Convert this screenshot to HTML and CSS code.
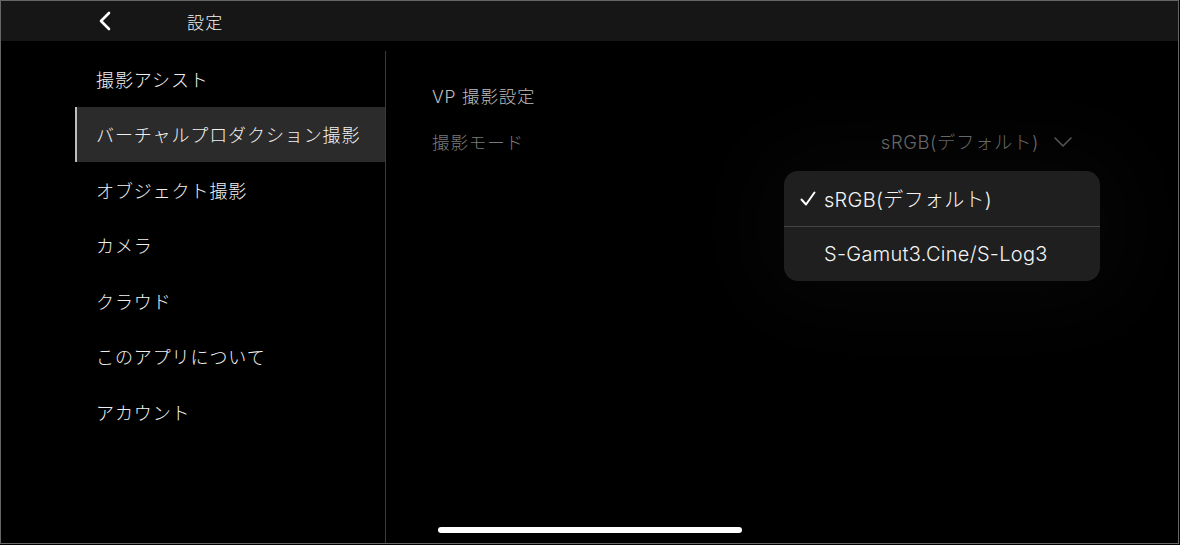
FILE: index.html
```html
<!DOCTYPE html>
<html lang="ja">
<head>
  <meta charset="UTF-8">
  <title>設定</title>
  <link rel="stylesheet" href="styles.css">
</head>
<body>
  <div class="screen">
    <header class="topbar">
      <button class="back" aria-label="戻る">
        <svg width="14" height="20" viewBox="0 0 14 20"><path d="M11 2 L3 10 L11 18" fill="none" stroke="#fff" stroke-width="2.6" stroke-linecap="round" stroke-linejoin="round"/></svg>
      </button>
      <div class="title">設定</div>
    </header>

    <div class="main">
      <nav class="sidebar">
        <div class="nav-item">撮影アシスト</div>
        <div class="nav-item active">バーチャルプロダクション撮影</div>
        <div class="nav-item">オブジェクト撮影</div>
        <div class="nav-item">カメラ</div>
        <div class="nav-item">クラウド</div>
        <div class="nav-item">このアプリについて</div>
        <div class="nav-item">アカウント</div>
      </nav>

      <section class="content">
        <div class="section-title">VP 撮影設定</div>
        <div class="row">
          <span class="label">撮影モード</span>
          <span class="value">sRGB(デフォルト)
            <svg class="chev" width="20" height="12" viewBox="0 0 20 12"><path d="M2 2 L10 10 L18 2" fill="none" stroke="#555" stroke-width="1.6" stroke-linecap="round" stroke-linejoin="round"/></svg>
          </span>
        </div>

        <div class="menu">
          <div class="menu-item">
            <svg class="check" width="16" height="16" viewBox="0 0 16 16"><path d="M1.5 8.5 L6 13.5 L14.5 1.5" fill="none" stroke="#fff" stroke-width="2" stroke-linecap="round" stroke-linejoin="round"/></svg>
            sRGB(デフォルト)
          </div>
          <div class="menu-item">S-Gamut3.Cine/S-Log3</div>
        </div>
      </section>
    </div>

    <div class="home-bar"></div>
  </div>
</body>
</html>
```

FILE: styles.css
```css
body {
  margin: 0;
  background: #000;
  font-family: Inter, "Noto Sans CJK JP", sans-serif;
  color: #f0f0f0;
}
.screen {
  position: relative;
  box-sizing: border-box;
  width: 1179px;
  height: 544px;
  border: 1px solid #666;
  background: #000;
  overflow: hidden;
  display: flex;
  flex-direction: column;
}
.topbar {
  height: 40px;
  background: #161616;
  display: flex;
  align-items: center;
  flex-shrink: 0;
}
.back {
  background: none;
  border: none;
  padding: 0;
  margin-left: 97px;
  width: 16px;
  height: 20px;
  display: flex;
  align-items: center;
}
.title {
  margin-left: 73px;
  font-family: "Noto Sans CJK JP", sans-serif;
  font-size: 17px;
  font-weight: 300;
  letter-spacing: 1.2px;
  color: #f2f2f2;
}
.main {
  flex: 1;
  display: flex;
}
.sidebar {
  width: 384px;
  margin-top: 10px;
  border-right: 1px solid #3a3a3a;
  flex-shrink: 0;
}
.nav-item {
  margin-left: 74px;
  height: 55.5px;
  display: flex;
  align-items: center;
  padding-left: 19px;
  border-left: 2px solid transparent;
  font-family: "Noto Sans CJK JP", sans-serif;
  font-size: 18px;
  font-weight: 300;
  letter-spacing: 0.9px;
  color: #f0f0f0;
}
.nav-item.active {
  background: #2b2b2b;
  border-left-color: #bdbdbd;
}
.content {
  flex: 1;
  padding: 44px 105px 0 46px;
}
.section-title {
  height: 24px;
  line-height: 24px;
  font-size: 17.5px;
  font-weight: 300;
  letter-spacing: 0.8px;
  color: #bdbdbd;
}
.row {
  margin-top: 10px;
  height: 44px;
  display: flex;
  align-items: center;
  justify-content: space-between;
}
.label {
  font-size: 17.5px;
  font-weight: 300;
  letter-spacing: 0.9px;
  color: #7a7a7a;
}
.value {
  display: flex;
  align-items: center;
  gap: 14px;
  font-size: 18.4px;
  font-weight: 300;
  letter-spacing: 0.6px;
  color: #666;
}
.chev {
  margin-top: 1px;
}
.menu {
  position: absolute;
  left: 783px;
  top: 170px;
  width: 316px;
  height: 110px;
  border-radius: 14px;
  background: #1f1f1f;
  box-shadow: 0 0 90px 30px rgba(255, 255, 255, 0.025);
  display: flex;
  flex-direction: column;
}
.menu-item {
  height: 55px;
  display: flex;
  align-items: center;
  padding-left: 40px;
  position: relative;
  font-size: 20px;
  font-weight: 300;
  letter-spacing: 0.3px;
  color: #f4f4f4;
}
.menu-item + .menu-item {
  border-top: 1px solid #444;
}
.check {
  position: absolute;
  left: 16px;
  top: 20px;
}
.home-bar {
  position: absolute;
  left: 437px;
  bottom: 10px;
  width: 304px;
  height: 6px;
  border-radius: 3px;
  background: #fff;
}
```
